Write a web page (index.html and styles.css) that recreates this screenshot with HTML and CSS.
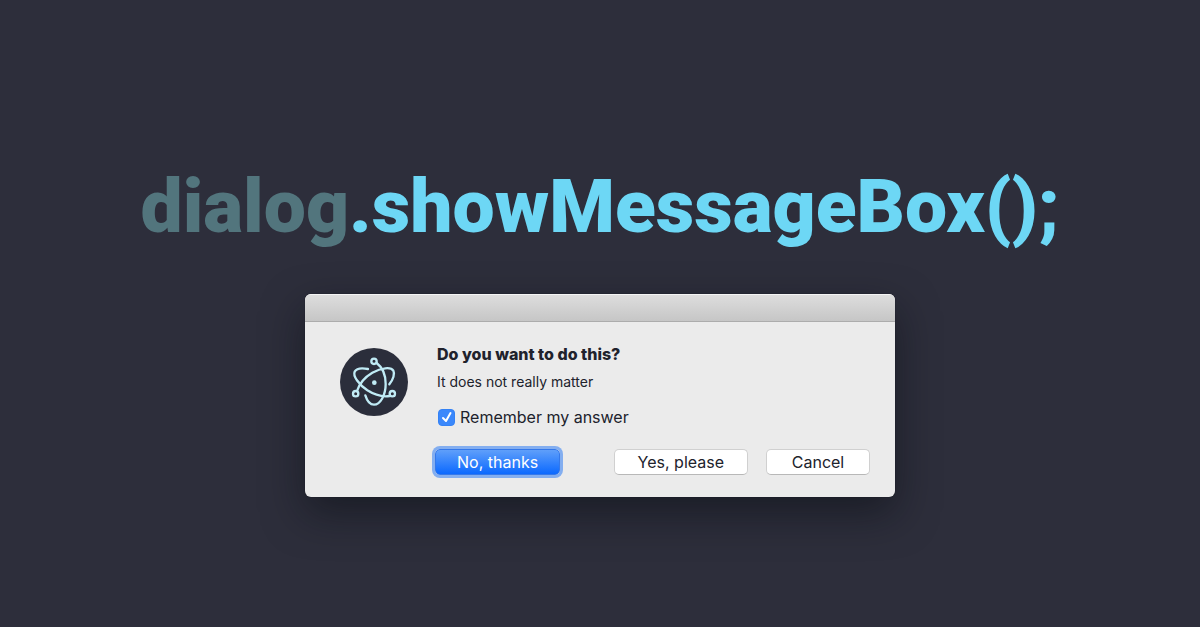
FILE: index.html
```html
<!DOCTYPE html>
<html lang="en">
<head>
<meta charset="utf-8">
<meta name="viewport" content="width=device-width, initial-scale=1">
<title>dialog.showMessageBox();</title>
<link rel="stylesheet" href="styles.css">
</head>
<body>
<main class="page">
  <h1 class="headline"><span class="headline-object">dialog</span>.showMessageBox();</h1>
  <section class="dialog" role="dialog" aria-labelledby="message" aria-describedby="detail">
    <div class="titlebar"></div>
    <form class="dialog-body">
      <svg class="app-icon" viewBox="31 24 204 204" aria-hidden="true">
        <circle cx="133" cy="126" r="102" fill="#2b2e3b"/>
        <g fill="none" stroke="#c0ebf5" stroke-width="7" stroke-linecap="round">
          <path d="M115 87C95 83 80 86 75 95C69 108 88 134 113 151C135 165 160 171 180 168"/>
          <path d="M141 69C158 82 168 107 168 132C168 165 152 194 133 194C121 194 112 182 107 166"/>
          <path d="M82 153C88 134 104 112 128 98C155 83 184 80 191 92C196 101 191 118 179 133"/>
          <circle cx="133" cy="64" r="8"/>
          <circle cx="78" cy="161" r="8"/>
          <circle cx="188" cy="161" r="8"/>
        </g>
        <circle cx="134" cy="128" r="7" fill="#c0ebf5"/>
      </svg>
      <div class="content">
        <h2 class="message" id="message">Do you want to do this?</h2>
        <p class="detail" id="detail">It does not really matter</p>
        <label class="remember" for="remember"><input class="checkbox" type="checkbox" id="remember" checked>Remember my answer</label>
        <div class="actions">
          <button class="button button-primary" type="button">No, thanks</button>
          <button class="button" type="button">Yes, please</button>
          <button class="button" type="button">Cancel</button>
        </div>
      </div>
    </form>
  </section>
</main>
</body>
</html>
```
FILE: styles.css
```css
* {
  box-sizing: border-box;
}

body {
  margin: 0;
  background: #2d2e3b;
  color: #20222c;
  font-family: Inter, "Liberation Sans", sans-serif;
}

.page {
  display: flex;
  flex-direction: column;
  align-items: center;
  gap: 38px;
  min-height: 100vh;
  padding: 156px 16px 40px;
}

.headline {
  margin: 0;
  color: #6dd7f5;
  font-family: Roboto, "Liberation Sans", sans-serif;
  font-size: 75px;
  font-weight: 900;
  line-height: 100px;
}

.headline-object {
  color: #52757d;
}

.dialog {
  width: 100%;
  max-width: 590px;
  overflow: hidden;
  border-radius: 6px;
  background: #ebebeb;
  box-shadow: 0 16px 40px rgba(8, 12, 18, 0.5), 0 0 1px #111318;
}

.titlebar {
  height: 28px;
  border-top: 1px solid #f4f4f4;
  border-bottom: 1px solid #acacac;
  background: linear-gradient(#dddddd, #c6c6c6);
}

.dialog-body {
  display: flex;
  gap: 28px;
  padding: 20px 25px 22px 35px;
}

.app-icon {
  flex: none;
  width: 68px;
  height: 68px;
  margin-top: 6px;
}

.content {
  flex: 1;
  display: flex;
  flex-direction: column;
  align-items: flex-start;
}

.message {
  margin: 0 0 8px;
  padding-left: 1px;
  font-size: 16px;
  font-weight: 800;
  line-height: 24px;
}

.detail {
  margin: 0 0 15px;
  padding-left: 1px;
  font-size: 14px;
  line-height: 16px;
}

.remember {
  display: flex;
  align-items: center;
  gap: 5px;
  padding-left: 2px;
  font-size: 16px;
  line-height: 24px;
}

.checkbox {
  appearance: none;
  width: 17px;
  height: 17px;
  margin: 0;
  border: 1px solid #a8a8a8;
  border-radius: 4px;
  background: #ffffff;
}

.checkbox:checked {
  border-color: #3482f5;
  background: #3b88fb url("data:image/svg+xml,%3Csvg xmlns='http://www.w3.org/2000/svg' viewBox='0 0 15 15'%3E%3Cpath d='M4 8l3 3 4.500-8' fill='none' stroke='white' stroke-width='2' stroke-linecap='round' stroke-linejoin='round'/%3E%3C/svg%3E") center / 15px 15px;
}

.actions {
  display: flex;
  align-self: stretch;
  gap: 18px;
  margin-top: 20px;
}

.button {
  min-width: 104px;
  height: 26px;
  padding: 0 23px;
  border: 1px solid #d0d0d0;
  border-bottom-color: #b8b8b8;
  border-radius: 5px;
  background: #ffffff;
  color: #20222c;
  font: 16px/24px Inter, "Liberation Sans", sans-serif;
  white-space: nowrap;
}

.button-primary {
  margin-right: auto;
  margin-left: -1px;
  padding: 0 21px;
  border-color: #3478ea;
  background: linear-gradient(#5f9ffa, #0b69ff);
  box-shadow: 0 0 0 3px #83aef0;
  color: #ffffff;
}
```
